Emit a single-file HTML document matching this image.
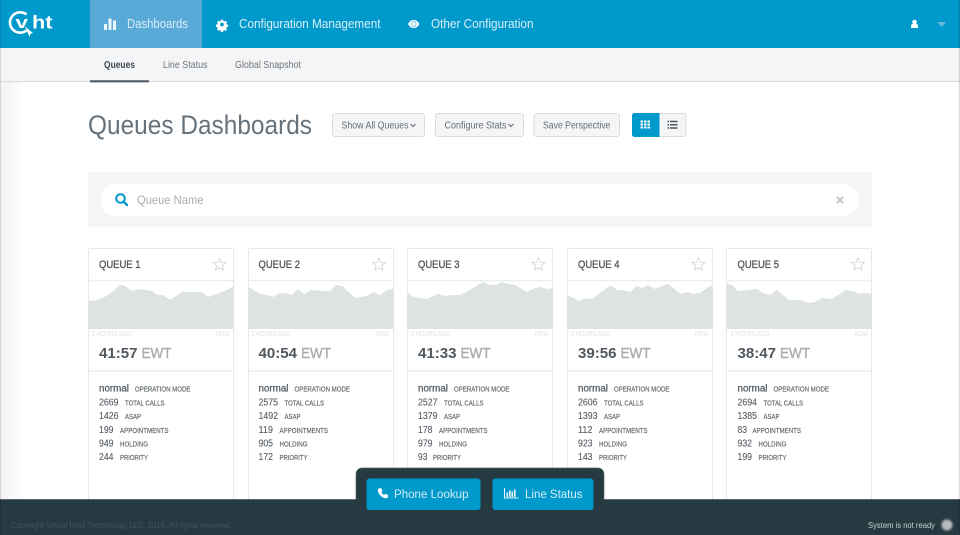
<!DOCTYPE html>
<html lang="en">
<head>
<meta charset="utf-8">
<title>Queues Dashboards</title>
<style>
html,body{margin:0;padding:0;width:960px;height:535px;overflow:hidden;background:#fff}
svg{display:block;position:absolute;left:0;top:0}
text{font-family:"Liberation Sans",sans-serif}
.nav{font-size:12.5px;fill:#d9eff8}
.sub{font-size:10px;fill:#6e7479}
.btn{font-size:10px;fill:#676d72}
.box{fill:#f4f5f7;stroke:#d9dcde;stroke-width:1}
.card{fill:#fff;stroke:#e6e8e9;stroke-width:1}
.sep{stroke:#eceeee;stroke-width:1.5}
.qt{font-size:11px;fill:#50585f;stroke:#50585f;stroke-width:.35}
.star{fill:#fff;stroke:#d2d6d8;stroke-width:.9}
.chart{fill:#dde2e2}
.tick{font-size:7px;fill:#dfe2e3}
.time{font-size:14.5px;font-weight:bold;fill:#50585f}
.ewt{font-size:14.5px;fill:#a9aeb1;stroke:#a9aeb1;stroke-width:.4}
.n{font-size:10px;fill:#575e65;stroke:#575e65;stroke-width:.12}
.m{font-size:10px;fill:#575e65;stroke:#575e65;stroke-width:.3}
.l{font-size:7.3px;fill:#62696f;stroke:#62696f;stroke-width:.18}
.w{font-size:11.5px;fill:#d6eef8}
</style>
</head>
<body>
<svg width="960" height="535" viewBox="0 0 960 535" xmlns="http://www.w3.org/2000/svg">
<defs>
<linearGradient id="sh" x1="0" x2="1" y1="0" y2="0"><stop offset="0" stop-color="#000" stop-opacity=".05"/><stop offset="1" stop-color="#000" stop-opacity="0"/></linearGradient>
<filter id="bl" x="-50%" y="-50%" width="200%" height="200%"><feGaussianBlur stdDeviation="1"/></filter>
</defs>
<rect width="960" height="535" fill="#fff"/>
<rect x="0" y="82" width="24" height="420" fill="url(#sh)"/>

<!-- header -->
<rect width="960" height="48" fill="#0099cb"/>
<rect x="90" width="112" height="48" fill="#5aaad8"/>
<!-- logo -->
<path d="M26.500 14.500A10.200 10.200 0 1 0 26.500 30.500" fill="none" stroke="#fff" stroke-width="2.600"/>
<text x="15.500" y="28" font-size="17" font-weight="bold" fill="#fff" textLength="12.500" lengthAdjust="spacingAndGlyphs">v</text>
<path d="M25 26.500L33 33L30.500 33.800L29.500 37Z" fill="#fff"/>
<text x="32" y="28.500" font-size="18" font-weight="bold" fill="#fff" textLength="20.500" lengthAdjust="spacingAndGlyphs">ht</text>
<!-- nav icons -->
<path d="M104 24h3v6h-3zM108.500 18.500h3V30h-3zM113 20.500h3V30h-3z" fill="#eaf6fb"/>
<path fill="#fff" fill-rule="evenodd" transform="translate(222 24.500) scale(.74) translate(-222 -24)" d="M220.500 17.500h3l.4 1.800 1.300.6 1.600-1 2 2.100-1 1.500.5 1.400 1.900.4v2.900l-1.900.4-.5 1.400 1 1.500-2 2.100-1.600-1-1.300.6-.4 1.800h-3l-.4-1.800-1.300-.6-1.600 1-2-2.100 1-1.500-.5-1.400-1.900-.4v-2.900l1.900-.4.5-1.400-1-1.500 2-2.100 1.600 1 1.300-.6zM222 21.500a2.500 2.500 0 1 0 0 5 2.500 2.500 0 0 0 0-5z"/>
<path fill="#fff" fill-rule="evenodd" d="M408 24c1.500-2.700 3.200-4 5.700-4s4.200 1.300 5.700 4c-1.500 2.700-3.200 4-5.700 4s-4.200-1.300-5.700-4zM413.700 21.300a2.700 2.700 0 1 0 0 5.400 2.700 2.700 0 0 0 0-5.400z"/>
<circle cx="413.700" cy="24" r="2.200" fill="#fff"/>
<text class="nav" x="127" y="28" textLength="61" lengthAdjust="spacingAndGlyphs">Dashboards</text>
<text class="nav" x="239" y="28" textLength="141.500" lengthAdjust="spacingAndGlyphs">Configuration Management</text>
<text class="nav" x="431" y="28" textLength="102.500" lengthAdjust="spacingAndGlyphs">Other Configuration</text>
<!-- user -->
<circle cx="914.500" cy="22" r="2.300" fill="#fff"/>
<path d="M911 28v-2.300c0-1 1-1.700 2-1.900h3c1 .2 2 .9 2 1.900V28z" fill="#fff"/>
<path d="M937 22h9l-4.500 5z" fill="#62b9de"/>

<!-- subnav -->
<rect y="48" width="960" height="33" fill="#f4f5f7"/>
<rect y="81" width="960" height="1.200" fill="#d9dcdd"/>
<rect x="90" y="80.300" width="59" height="2" fill="#4a5560"/>
<text class="sub" x="104" y="68" font-weight="bold" style="fill:#3f4851" textLength="31" lengthAdjust="spacingAndGlyphs">Queues</text>
<text class="sub" x="163" y="68" textLength="44.500" lengthAdjust="spacingAndGlyphs">Line Status</text>
<text class="sub" x="235" y="68" textLength="66" lengthAdjust="spacingAndGlyphs">Global Snapshot</text>

<!-- title row -->
<text x="88" y="134" font-size="27" fill="#66727c" textLength="224" lengthAdjust="spacingAndGlyphs">Queues Dashboards</text>
<rect class="box" x="332.500" y="113.500" width="92" height="23" rx="2.500"/>
<text class="btn" x="341.500" y="128.500" textLength="67" lengthAdjust="spacingAndGlyphs">Show All Queues</text>
<path d="M410.500 124l2.500 2.500 2.500-2.500" fill="none" stroke="#5c6267" stroke-width="1"/>
<rect class="box" x="435.500" y="113.500" width="88" height="23" rx="2.500"/>
<text class="btn" x="444.500" y="128.500" textLength="62" lengthAdjust="spacingAndGlyphs">Configure Stats</text>
<path d="M508.500 124l2.500 2.500 2.500-2.500" fill="none" stroke="#5c6267" stroke-width="1"/>
<rect class="box" x="534" y="113.500" width="85.500" height="23" rx="2.500"/>
<text class="btn" x="543" y="128.500" textLength="67.500" lengthAdjust="spacingAndGlyphs">Save Perspective</text>
<rect class="box" x="632.500" y="113.500" width="53.500" height="23" rx="2.500"/>
<path d="M634.500 113h25v24h-25a2.500 2.500 0 0 1-2.500-2.500v-19a2.500 2.500 0 0 1 2.500-2.500z" fill="#0099cb"/>
<path d="M640.500 120.500h2.500v2h-2.500zM644 120.500h2.500v2H644zM647.500 120.500h2.500v2h-2.500zM640.500 123.500h2.500v2h-2.500zM644 123.500h2.500v2H644zM647.500 123.500h2.500v2h-2.500zM640.500 126.500h2.500v2h-2.500zM644 126.500h2.500v2H644zM647.500 126.500h2.500v2h-2.500z" fill="#fff"/>
<path d="M667.500 120.700h1.600v1.500h-1.600zM670 120.700h7.500v1.500H670zM667.500 124h1.600v1.500h-1.600zM670 124h7.500v1.500H670zM667.500 127.300h1.600v1.500h-1.600zM670 127.300h7.500v1.500H670z" fill="#4d555c"/>

<!-- search -->
<rect x="88" y="172" width="784" height="55" fill="#f4f5f7"/>
<rect x="100" y="184" width="759" height="32" rx="16" fill="#fff"/>
<circle cx="120.500" cy="198.500" r="4.300" fill="none" stroke="#0099cb" stroke-width="2"/>
<path d="M123.500 201.500l3.500 3.500" stroke="#0099cb" stroke-width="2.400" stroke-linecap="round"/>
<text x="137" y="204" font-size="12" fill="#a8acaf" textLength="66.500" lengthAdjust="spacingAndGlyphs">Queue Name</text>
<path d="M837 197l6 6M843 197l-6 6" stroke="#c6cacc" stroke-width="2.200"/>

<!-- card frames -->
<rect class="card" x="88.500" y="248.500" width="145" height="270" rx="2"/>
<rect class="card" x="248.500" y="248.500" width="145" height="270" rx="2"/>
<rect class="card" x="407.500" y="248.500" width="145" height="270" rx="2"/>
<rect class="card" x="567.500" y="248.500" width="145" height="270" rx="2"/>
<rect class="card" x="726.500" y="248.500" width="145" height="270" rx="2"/>
<!-- charts -->
<polygon class="chart" points="88.500,329 88.500,300.700 95,300.700 105,296.700 112,292 120,285 125,286 132,291 138,289 152,291 157,295 163,295 170,300 182,292 190,292 202,292 208,297 213,295 220,293 227,290 233.500,286 233.500,329"/>
<polygon class="chart" points="248.500,329 248.500,287 260,294 267,295 273,297 280,293 285,293 292,295 298,289 304,294 311,290 323,291 330,291 336,285 342,286 355,298 360,297 367,296 373,292 380,295 387,290 393.500,289 393.500,329"/>
<polygon class="chart" points="407.500,329 407.500,292 413,297 420,298 427,299 438,294 445,296 452,295 460,295 470,290 483,282 490,285 496,285 502,282 508,284 515,285 527,292 535,288 540,287 547,289 552.500,288 552.500,329"/>
<polygon class="chart" points="567.500,329 567.500,295 579,301 586,298 592,299 611,285 617,290 623,290 630,292 637,286 642,288 648,285 655,289 662,286 668,284 681,294 687,292 693,294 700,293 707,288 712.500,285 712.500,329"/>
<polygon class="chart" points="726.500,329 726.500,284 732,285 738,291 757,289 763,293 770,295 777,290 789,300 802,300 808,303 815,302 822,298 832,299 846,290 852,291 860,294 865,293 871.500,294 871.500,329"/>

<!-- card 1 -->
<g>
<line class="sep" x1="89" x2="233" y1="280.500" y2="280.500"/><line class="sep" x1="89" x2="233" y1="371" y2="371"/>
<text class="qt" x="99" y="268" textLength="41.500" lengthAdjust="spacingAndGlyphs">QUEUE 1</text>
<path class="star" d="M219.500 258l1.800 4.200 4.500.4-3.400 3 1 4.400-3.900-2.300-3.900 2.300 1-4.400-3.400-3 4.500-.4z"/>
<text class="tick" x="92" y="336" textLength="39" lengthAdjust="spacingAndGlyphs">2 HOURS AGO</text><text class="tick" x="216" y="336" textLength="13.500" lengthAdjust="spacingAndGlyphs">NOW</text>
<text class="time" x="99" y="358" textLength="38.500" lengthAdjust="spacingAndGlyphs">41:57</text><text class="ewt" x="141.500" y="358" textLength="30" lengthAdjust="spacingAndGlyphs">EWT</text>
<text class="m" x="99" y="391.500" textLength="30" lengthAdjust="spacingAndGlyphs">normal</text><text class="l" x="135" y="391.500" textLength="55.500" lengthAdjust="spacingAndGlyphs">OPERATION MODE</text>
<text class="n" x="99" y="405.500" textLength="19.500" lengthAdjust="spacingAndGlyphs">2669</text><text class="l" x="125" y="405.500" textLength="39.500" lengthAdjust="spacingAndGlyphs">TOTAL CALLS</text>
<text class="n" x="99" y="419" textLength="19.500" lengthAdjust="spacingAndGlyphs">1426</text><text class="l" x="125" y="419" textLength="16" lengthAdjust="spacingAndGlyphs">ASAP</text>
<text class="n" x="99" y="433" textLength="14.500" lengthAdjust="spacingAndGlyphs">199</text><text class="l" x="120" y="433" textLength="48.500" lengthAdjust="spacingAndGlyphs">APPOINTMENTS</text>
<text class="n" x="99" y="446.500" textLength="14.500" lengthAdjust="spacingAndGlyphs">949</text><text class="l" x="120" y="446.500" textLength="28" lengthAdjust="spacingAndGlyphs">HOLDING</text>
<text class="n" x="99" y="460" textLength="14.500" lengthAdjust="spacingAndGlyphs">244</text><text class="l" x="120" y="460" textLength="28" lengthAdjust="spacingAndGlyphs">PRIORITY</text>
</g>
<!-- card 2 -->
<g transform="translate(159.500 0)">
<line class="sep" x1="89" x2="233" y1="280.500" y2="280.500"/><line class="sep" x1="89" x2="233" y1="371" y2="371"/>
<text class="qt" x="99" y="268" textLength="41.500" lengthAdjust="spacingAndGlyphs">QUEUE 2</text>
<path class="star" d="M219.500 258l1.800 4.200 4.500.4-3.400 3 1 4.400-3.900-2.300-3.900 2.300 1-4.400-3.400-3 4.500-.4z"/>
<text class="tick" x="92" y="336" textLength="39" lengthAdjust="spacingAndGlyphs">2 HOURS AGO</text><text class="tick" x="216" y="336" textLength="13.500" lengthAdjust="spacingAndGlyphs">NOW</text>
<text class="time" x="99" y="358" textLength="38.500" lengthAdjust="spacingAndGlyphs">40:54</text><text class="ewt" x="141.500" y="358" textLength="30" lengthAdjust="spacingAndGlyphs">EWT</text>
<text class="m" x="99" y="391.500" textLength="30" lengthAdjust="spacingAndGlyphs">normal</text><text class="l" x="135" y="391.500" textLength="55.500" lengthAdjust="spacingAndGlyphs">OPERATION MODE</text>
<text class="n" x="99" y="405.500" textLength="19.500" lengthAdjust="spacingAndGlyphs">2575</text><text class="l" x="125" y="405.500" textLength="39.500" lengthAdjust="spacingAndGlyphs">TOTAL CALLS</text>
<text class="n" x="99" y="419" textLength="19.500" lengthAdjust="spacingAndGlyphs">1492</text><text class="l" x="125" y="419" textLength="16" lengthAdjust="spacingAndGlyphs">ASAP</text>
<text class="n" x="99" y="433" textLength="14.500" lengthAdjust="spacingAndGlyphs">119</text><text class="l" x="120" y="433" textLength="48.500" lengthAdjust="spacingAndGlyphs">APPOINTMENTS</text>
<text class="n" x="99" y="446.500" textLength="14.500" lengthAdjust="spacingAndGlyphs">905</text><text class="l" x="120" y="446.500" textLength="28" lengthAdjust="spacingAndGlyphs">HOLDING</text>
<text class="n" x="99" y="460" textLength="14.500" lengthAdjust="spacingAndGlyphs">172</text><text class="l" x="120" y="460" textLength="28" lengthAdjust="spacingAndGlyphs">PRIORITY</text>
</g>
<!-- card 3 -->
<g transform="translate(319 0)">
<line class="sep" x1="89" x2="233" y1="280.500" y2="280.500"/><line class="sep" x1="89" x2="233" y1="371" y2="371"/>
<text class="qt" x="99" y="268" textLength="41.500" lengthAdjust="spacingAndGlyphs">QUEUE 3</text>
<path class="star" d="M219.500 258l1.800 4.200 4.500.4-3.400 3 1 4.400-3.900-2.300-3.900 2.300 1-4.400-3.400-3 4.500-.4z"/>
<text class="tick" x="92" y="336" textLength="39" lengthAdjust="spacingAndGlyphs">2 HOURS AGO</text><text class="tick" x="216" y="336" textLength="13.500" lengthAdjust="spacingAndGlyphs">NOW</text>
<text class="time" x="99" y="358" textLength="38.500" lengthAdjust="spacingAndGlyphs">41:33</text><text class="ewt" x="141.500" y="358" textLength="30" lengthAdjust="spacingAndGlyphs">EWT</text>
<text class="m" x="99" y="391.500" textLength="30" lengthAdjust="spacingAndGlyphs">normal</text><text class="l" x="135" y="391.500" textLength="55.500" lengthAdjust="spacingAndGlyphs">OPERATION MODE</text>
<text class="n" x="99" y="405.500" textLength="19.500" lengthAdjust="spacingAndGlyphs">2527</text><text class="l" x="125" y="405.500" textLength="39.500" lengthAdjust="spacingAndGlyphs">TOTAL CALLS</text>
<text class="n" x="99" y="419" textLength="19.500" lengthAdjust="spacingAndGlyphs">1379</text><text class="l" x="125" y="419" textLength="16" lengthAdjust="spacingAndGlyphs">ASAP</text>
<text class="n" x="99" y="433" textLength="14.500" lengthAdjust="spacingAndGlyphs">178</text><text class="l" x="120" y="433" textLength="48.500" lengthAdjust="spacingAndGlyphs">APPOINTMENTS</text>
<text class="n" x="99" y="446.500" textLength="14.500" lengthAdjust="spacingAndGlyphs">979</text><text class="l" x="120" y="446.500" textLength="28" lengthAdjust="spacingAndGlyphs">HOLDING</text>
<text class="n" x="99" y="460" textLength="9.500" lengthAdjust="spacingAndGlyphs">93</text><text class="l" x="114" y="460" textLength="28" lengthAdjust="spacingAndGlyphs">PRIORITY</text>
</g>
<!-- card 4 -->
<g transform="translate(479 0)">
<line class="sep" x1="89" x2="233" y1="280.500" y2="280.500"/><line class="sep" x1="89" x2="233" y1="371" y2="371"/>
<text class="qt" x="99" y="268" textLength="41.500" lengthAdjust="spacingAndGlyphs">QUEUE 4</text>
<path class="star" d="M219.500 258l1.800 4.200 4.500.4-3.400 3 1 4.400-3.900-2.300-3.900 2.300 1-4.400-3.400-3 4.500-.4z"/>
<text class="tick" x="92" y="336" textLength="39" lengthAdjust="spacingAndGlyphs">2 HOURS AGO</text><text class="tick" x="216" y="336" textLength="13.500" lengthAdjust="spacingAndGlyphs">NOW</text>
<text class="time" x="99" y="358" textLength="38.500" lengthAdjust="spacingAndGlyphs">39:56</text><text class="ewt" x="141.500" y="358" textLength="30" lengthAdjust="spacingAndGlyphs">EWT</text>
<text class="m" x="99" y="391.500" textLength="30" lengthAdjust="spacingAndGlyphs">normal</text><text class="l" x="135" y="391.500" textLength="55.500" lengthAdjust="spacingAndGlyphs">OPERATION MODE</text>
<text class="n" x="99" y="405.500" textLength="19.500" lengthAdjust="spacingAndGlyphs">2606</text><text class="l" x="125" y="405.500" textLength="39.500" lengthAdjust="spacingAndGlyphs">TOTAL CALLS</text>
<text class="n" x="99" y="419" textLength="19.500" lengthAdjust="spacingAndGlyphs">1393</text><text class="l" x="125" y="419" textLength="16" lengthAdjust="spacingAndGlyphs">ASAP</text>
<text class="n" x="99" y="433" textLength="14.500" lengthAdjust="spacingAndGlyphs">112</text><text class="l" x="120" y="433" textLength="48.500" lengthAdjust="spacingAndGlyphs">APPOINTMENTS</text>
<text class="n" x="99" y="446.500" textLength="14.500" lengthAdjust="spacingAndGlyphs">923</text><text class="l" x="120" y="446.500" textLength="28" lengthAdjust="spacingAndGlyphs">HOLDING</text>
<text class="n" x="99" y="460" textLength="14.500" lengthAdjust="spacingAndGlyphs">143</text><text class="l" x="120" y="460" textLength="28" lengthAdjust="spacingAndGlyphs">PRIORITY</text>
</g>
<!-- card 5 -->
<g transform="translate(638.500 0)">
<line class="sep" x1="89" x2="233" y1="280.500" y2="280.500"/><line class="sep" x1="89" x2="233" y1="371" y2="371"/>
<text class="qt" x="99" y="268" textLength="41.500" lengthAdjust="spacingAndGlyphs">QUEUE 5</text>
<path class="star" d="M219.500 258l1.800 4.200 4.500.4-3.400 3 1 4.400-3.900-2.300-3.900 2.300 1-4.400-3.400-3 4.500-.4z"/>
<text class="tick" x="92" y="336" textLength="39" lengthAdjust="spacingAndGlyphs">2 HOURS AGO</text><text class="tick" x="216" y="336" textLength="13.500" lengthAdjust="spacingAndGlyphs">NOW</text>
<text class="time" x="99" y="358" textLength="38.500" lengthAdjust="spacingAndGlyphs">38:47</text><text class="ewt" x="141.500" y="358" textLength="30" lengthAdjust="spacingAndGlyphs">EWT</text>
<text class="m" x="99" y="391.500" textLength="30" lengthAdjust="spacingAndGlyphs">normal</text><text class="l" x="135" y="391.500" textLength="55.500" lengthAdjust="spacingAndGlyphs">OPERATION MODE</text>
<text class="n" x="99" y="405.500" textLength="19.500" lengthAdjust="spacingAndGlyphs">2694</text><text class="l" x="125" y="405.500" textLength="39.500" lengthAdjust="spacingAndGlyphs">TOTAL CALLS</text>
<text class="n" x="99" y="419" textLength="19.500" lengthAdjust="spacingAndGlyphs">1385</text><text class="l" x="125" y="419" textLength="16" lengthAdjust="spacingAndGlyphs">ASAP</text>
<text class="n" x="99" y="433" textLength="9.500" lengthAdjust="spacingAndGlyphs">83</text><text class="l" x="114" y="433" textLength="48.500" lengthAdjust="spacingAndGlyphs">APPOINTMENTS</text>
<text class="n" x="99" y="446.500" textLength="14.500" lengthAdjust="spacingAndGlyphs">932</text><text class="l" x="120" y="446.500" textLength="28" lengthAdjust="spacingAndGlyphs">HOLDING</text>
<text class="n" x="99" y="460" textLength="14.500" lengthAdjust="spacingAndGlyphs">199</text><text class="l" x="120" y="460" textLength="28" lengthAdjust="spacingAndGlyphs">PRIORITY</text>
</g>

<!-- footer -->
<rect y="499.500" width="960" height="35.500" fill="#263a42"/>
<rect y="499" width="960" height="1" fill="#55666d"/>
<path d="M356 500v-26a6 6 0 0 1 6-6h236a6 6 0 0 1 6 6v26z" fill="#263a42"/>
<path d="M356 499v-25a6 6 0 0 1 6-6h236a6 6 0 0 1 6 6v25" fill="none" stroke="#55666d" stroke-width=".7"/>
<rect x="366.500" y="478.500" width="114" height="31.500" rx="3" fill="#0099cb"/>
<rect x="492.500" y="478.500" width="101" height="31.500" rx="3" fill="#0099cb"/>
<path d="M379 488.500l2-.5 1.500 3-1.200 1.200c.6 1.300 1.500 2.200 2.800 2.800l1.200-1.200 3 1.500-.5 2c-.3.600-1 1-2 1-4-.5-7.500-4-8-8 0-1 .4-1.500 1-1.800z" fill="#fff"/>
<path d="M504.500 488v10h14" fill="none" stroke="#e6f5fb" stroke-width="1"/>
<path d="M506.500 492.500h1.600v4.500h-1.600zM509 490.500h1.600v6.500H509zM511.500 491.500h1.600v5.500h-1.600zM514 489.500h1.600v7.500H514z" fill="#e6f5fb"/>
<text class="w" x="394" y="498" textLength="74.500" lengthAdjust="spacingAndGlyphs">Phone Lookup</text>
<text class="w" x="525" y="498" textLength="57.500" lengthAdjust="spacingAndGlyphs">Line Status</text>
<text x="11" y="528" font-size="8.500" fill="#42555d" textLength="221" lengthAdjust="spacingAndGlyphs">Copyright Virtual Hold Technology, LLC, 2016. All rights reserved.</text>
<text x="868" y="528" font-size="8.500" fill="#c6cfd1" textLength="67" lengthAdjust="spacingAndGlyphs">System is not ready</text>
<circle cx="947" cy="525" r="5.500" fill="#b6babb" filter="url(#bl)"/>
<rect x="958.500" y="0" width="1.500" height="535" fill="#000" opacity=".12"/>
<rect x="0" y="0" width="1" height="535" fill="#000" opacity=".12"/>
</svg>
</body>
</html>
